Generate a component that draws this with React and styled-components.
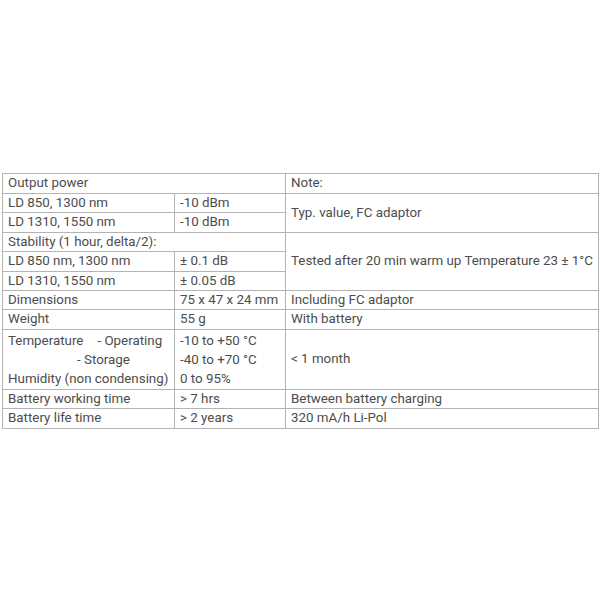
import React from 'react'
import styled, { createGlobalStyle } from 'styled-components'

const GlobalStyle = createGlobalStyle`
    html, body {
        margin: 0;
        padding: 0;
        background: #fff;
    }
    body {
        font-family: Roboto, "Noto Sans", Arial, sans-serif;
    }
`

const Page = styled.div`
    min-height: 600px;
    display: flex;
    align-items: center;
    padding: 2px 1px 0 2px;
    box-sizing: border-box;
`

const Table = styled.table`
    width: 100%;
    border-collapse: collapse;
    table-layout: fixed;
    color: #4d4d4d;
    font-size: 13.35px;
`

const Cell = styled.td`
    border: 1px solid #b4b4b4;
    padding: 0 5px;
    line-height: 18.4px;
    vertical-align: middle;
    white-space: nowrap;
    overflow: hidden;
`

const MultiCell = styled(Cell)`
    padding-top: 1px;
    padding-bottom: 1px;
    line-height: 19px;
`

const Line = styled.div`
    padding-left: ${p => p.indent || 0}px;
`

const Gap = styled.span`
    display: inline-block;
    width: ${p => p.w}px;
`

function App() {
    return (
        <>
            <GlobalStyle />
            <Page>
                <Table>
                    <colgroup>
                        <col style={{ width: 172 }} />
                        <col style={{ width: 111 }} />
                        <col />
                    </colgroup>
                    <tbody>
                        <tr>
                            <Cell colSpan={2}>Output power</Cell>
                            <Cell>Note:</Cell>
                        </tr>
                        <tr>
                            <Cell>LD 850, 1300 nm</Cell>
                            <Cell>-10 dBm</Cell>
                            <Cell rowSpan={2}>Typ. value, FC adaptor</Cell>
                        </tr>
                        <tr>
                            <Cell>LD 1310, 1550 nm</Cell>
                            <Cell>-10 dBm</Cell>
                        </tr>
                        <tr>
                            <Cell colSpan={2}>Stability (1 hour, delta/2):</Cell>
                            <Cell rowSpan={3}>Tested after 20 min warm up Temperature 23 ± 1°C</Cell>
                        </tr>
                        <tr>
                            <Cell>LD 850 nm, 1300 nm</Cell>
                            <Cell>± 0.1 dB</Cell>
                        </tr>
                        <tr>
                            <Cell>LD 1310, 1550 nm</Cell>
                            <Cell>± 0.05 dB</Cell>
                        </tr>
                        <tr>
                            <Cell>Dimensions</Cell>
                            <Cell>75 x 47 x 24 mm</Cell>
                            <Cell>Including FC adaptor</Cell>
                        </tr>
                        <tr>
                            <Cell>Weight</Cell>
                            <Cell>55 g</Cell>
                            <Cell>With battery</Cell>
                        </tr>
                        <tr>
                            <MultiCell>
                                <Line>Temperature<Gap w={14} />- Operating</Line>
                                <Line indent={69}>- Storage</Line>
                                <Line>Humidity (non condensing)</Line>
                            </MultiCell>
                            <MultiCell>
                                <Line>-10 to +50 °C</Line>
                                <Line>-40 to +70 °C</Line>
                                <Line>0 to 95%</Line>
                            </MultiCell>
                            <Cell>&lt; 1 month</Cell>
                        </tr>
                        <tr>
                            <Cell>Battery working time</Cell>
                            <Cell>&gt; 7 hrs</Cell>
                            <Cell>Between battery charging</Cell>
                        </tr>
                        <tr>
                            <Cell>Battery life time</Cell>
                            <Cell>&gt; 2 years</Cell>
                            <Cell>320 mA/h Li-Pol</Cell>
                        </tr>
                    </tbody>
                </Table>
            </Page>
        </>
    )
}

export default App
